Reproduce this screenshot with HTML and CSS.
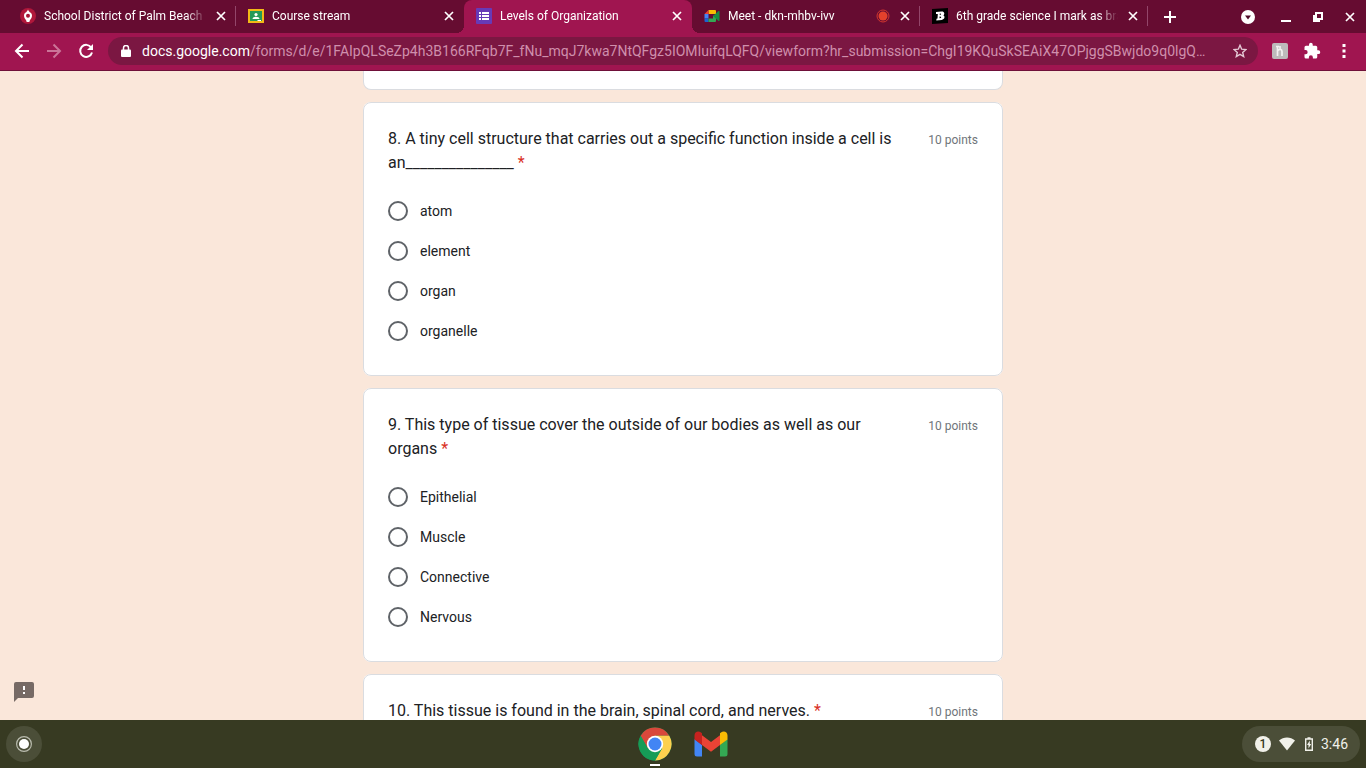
FILE: index.html
```html
<!DOCTYPE html>
<html lang="en">
<head>
<meta charset="utf-8">
<meta name="viewport" content="width=device-width, initial-scale=1">
<title>Levels of Organization</title>
<link rel="stylesheet" href="styles.css">
</head>
<body>
<svg class="defs" aria-hidden="true">
  <symbol id="close" viewBox="0 0 10 10"><path d="M1 1l8 8M9 1L1 9" fill="none" stroke="currentColor" stroke-width="1.7"/></symbol>
</svg>

<header class="browser">
  <div class="tab-strip">
    <nav class="tabs" aria-label="Tabs">
      <div class="tab">
        <a class="tab-link" href="#">
          <svg class="favicon" viewBox="0 0 16 16"><circle cx="8" cy="8" r="8" fill="#b0173b"/><path d="M8 1.500c.4 1.300 1 1.800 1.800 2.800C11.200 5 12 6 12 7.500c0 2.200-1.200 3.500-2 4.500l-.7 2H6.700L6 12C5.200 11 4 9.700 4 7.500 4 6 4.800 5 6.200 4.300 7 3.300 7.600 2.800 8 1.500z" fill="#fff"/><circle cx="8" cy="7.800" r="2" fill="#a51536"/></svg>
          <span class="tab-title">School District of Palm Beach</span>
        </a>
        <button class="tab-close" aria-label="Close School District tab"><svg width="10" height="10"><use href="#close"/></svg></button>
      </div>
      <div class="tab before-active">
        <a class="tab-link" href="#">
          <svg class="favicon" viewBox="0 0 16 16"><path d="M0 1h16v14H0z" fill="#f2b917"/><path d="M2 3h12v10H2z" fill="#249a58"/><circle cx="8" cy="6.500" r="1.600" fill="#fff"/><path d="M4.500 11c0-3 7-3 7 0z" fill="#fff"/><path d="M9.500 12h3.500v1H9.500z" fill="#fff"/></svg>
          <span class="tab-title">Course stream</span>
        </a>
        <button class="tab-close" aria-label="Close Course stream tab"><svg width="10" height="10"><use href="#close"/></svg></button>
      </div>
      <div class="tab active">
        <a class="tab-link" href="#" aria-current="page">
          <svg class="favicon" viewBox="0 0 16 16"><rect width="16" height="16" rx="1" fill="#673ab7"/><path d="M3 4h2v2H3zm3 0h7v2H6zM3 7h2v2H3zm3 0h7v2H6zm-3 3h2v2H3zm3 0h7v2H6z" fill="#fff"/></svg>
          <span class="tab-title">Levels of Organization</span>
        </a>
        <button class="tab-close" aria-label="Close Levels of Organization tab"><svg width="10" height="10"><use href="#close"/></svg></button>
      </div>
      <div class="tab">
        <a class="tab-link" href="#">
          <svg class="favicon" viewBox="0 0 16 16"><path d="M4.500 2H11a1 1 0 0 1 1 1v3H4.500z" fill="#fbbc04"/><path d="M4.500 2v4H.5z" fill="#ea4335"/><path d="M.5 6h4v4.500h-4z" fill="#4285f4"/><path d="M.5 10.500h4V14h-3a1 1 0 0 1-1-1z" fill="#1967d2"/><path d="M4.500 10.500H9V8l3-2v7a1 1 0 0 1-1 1H4.500z" fill="#34a853"/><path d="M9 8l5.500-5c.5-.3 1 0 1 .5v9c0 .5-.5.800-1 .5z" fill="#188b42"/></svg>
          <span class="tab-title">Meet - dkn-mhbv-ivv</span>
          <svg class="recording" viewBox="0 0 14 14" role="img" aria-label="Recording"><circle cx="7" cy="7" r="6" fill="none" stroke="#d3362f" stroke-width="1"/><circle cx="7" cy="7" r="4.500" fill="#e3412c"/></svg>
        </a>
        <button class="tab-close" aria-label="Close Meet tab"><svg width="10" height="10"><use href="#close"/></svg></button>
      </div>
      <div class="tab">
        <a class="tab-link" href="#">
          <svg class="favicon" viewBox="0 0 16 16"><path d="M0 1l16-1v15L0 16z" fill="#000"/><path fill-rule="evenodd" d="M4 4l5.500-.6c3-.3 3.600 2.700 1.800 3.900 2 .8 1.500 4.300-1.600 4.600l-5.400.6.200-1.800 1-.2.300-4.500-1.800.1zM7.800 5.500l-.1 1.500c1.800 0 2-1.700.1-1.500zm-.2 3l-.1 1.800c2.300 0 2.300-2 .1-1.800z" fill="#fff"/></svg>
          <span class="tab-title">6th grade science I mark as brainliest</span>
        </a>
        <button class="tab-close" aria-label="Close 6th grade science tab"><svg width="10" height="10"><use href="#close"/></svg></button>
      </div>
    </nav>
    <button class="new-tab" aria-label="New tab"><svg width="12" height="12" viewBox="0 0 12 12"><path d="M6 0v12M0 6h12" stroke="currentColor" stroke-width="2"/></svg></button>
    <div class="window-controls">
      <button class="tab-search" aria-label="Search tabs"><svg width="14" height="14" viewBox="0 0 14 14"><circle cx="7" cy="7" r="7" fill="#fff"/><path d="M4 5.500h6L7 9.500z" fill="#4f0c2a"/></svg></button>
      <button aria-label="Minimize"><svg width="12" height="12" viewBox="0 0 12 12"><path d="M1 10h10" stroke="currentColor" stroke-width="2"/></svg></button>
      <button aria-label="Restore"><svg width="12" height="12" viewBox="0 0 12 12"><path d="M4 2h6v6H4zM2 4v6h6" fill="none" stroke="currentColor" stroke-width="2"/></svg></button>
      <button aria-label="Close window"><svg width="10" height="10"><use href="#close"/></svg></button>
    </div>
  </div>

  <div class="toolbar">
    <button class="tool" aria-label="Back"><svg width="16" height="16" viewBox="0 0 16 16"><path d="M15 8H2.500M8.500 1.500L2 8l6.500 6.500" fill="none" stroke="currentColor" stroke-width="2"/></svg></button>
    <button class="tool dim" aria-label="Forward"><svg width="16" height="16" viewBox="0 0 16 16"><path d="M1 8h12.500M7.500 1.500L14 8l-6.500 6.500" fill="none" stroke="currentColor" stroke-width="2"/></svg></button>
    <button class="tool" aria-label="Reload"><svg width="16" height="16" viewBox="0 0 16 16"><path d="M13.200 4.500A6 6 0 1 0 14 9.500" fill="none" stroke="currentColor" stroke-width="2"/><path d="M15 1v6H9z" fill="currentColor"/></svg></button>
    <div class="omnibox">
      <svg class="lock" width="10" height="12" viewBox="0 0 10 12"><path d="M2.500 5V3a2.500 2.500 0 0 1 5 0v2" fill="none" stroke="currentColor" stroke-width="1.500"/><rect y="4.500" width="10" height="7.500" rx="1" fill="currentColor"/></svg>
      <label class="host" for="address">docs.google.com</label>
      <input class="address" id="address" type="text" value="/forms/d/e/1FAIpQLSeZp4h3B166RFqb7F_fNu_mqJ7kwa7NtQFgz5IOMIuifqLQFQ/viewform?hr_submission=ChgI19KQuSkSEAiX47OPjggSBwjdo9q0lgQ…">
      <button class="bookmark" aria-label="Bookmark this tab"><svg width="14" height="14" viewBox="0 0 14 14"><path d="M7 1.300l1.700 3.900 4.200.4-3.200 2.800 1 4.200L7 10.400l-3.700 2.200 1-4.200L1.100 5.600l4.200-.4z" fill="none" stroke="currentColor" stroke-width="1.400"/></svg></button>
    </div>
    <div class="extensions">
      <button aria-label="Honey"><svg width="16" height="16" viewBox="0 0 16 16"><rect width="16" height="16" rx="2" fill="#bdbabb"/><path d="M5.500 3v10M8 3v2.500M5.500 8c2-2.500 4.500-2 4.500.5V13M4 3.500h3" fill="none" stroke="#f3f1f1" stroke-width="1.700"/></svg></button>
      <button aria-label="Extensions"><svg width="18" height="18" viewBox="0 0 24 24"><path d="M20.500 11H19V7a2 2 0 0 0-2-2h-4V3.500a2.500 2.500 0 0 0-5 0V5H4a2 2 0 0 0-2 2v3.800h1.500a2.700 2.700 0 0 1 0 5.400H2V20a2 2 0 0 0 2 2h3.800v-1.500a2.700 2.700 0 0 1 5.400 0V22H17a2 2 0 0 0 2-2v-4h1.500a2.500 2.500 0 0 0 0-5z" fill="currentColor"/></svg></button>
      <button aria-label="Chrome menu"><svg width="4" height="14" viewBox="0 0 4 14"><path d="M.5 0h3v3h-3zM.5 5.500h3v3h-3zM.5 11h3v3h-3z" fill="currentColor"/></svg></button>
    </div>
  </div>
</header>

<main class="page">
  <form class="questions">
    <div class="card previous"></div>

    <fieldset class="card" aria-labelledby="q8">
      <div class="question">
        <h2 class="question-title" id="q8">8. A tiny cell structure that carries out a specific function inside a cell is an_______________&nbsp;<span class="required">*</span></h2>
        <span class="points">10 points</span>
      </div>
      <div class="options">
        <label class="option"><input type="radio" name="q8">atom</label>
        <label class="option"><input type="radio" name="q8">element</label>
        <label class="option"><input type="radio" name="q8">organ</label>
        <label class="option"><input type="radio" name="q8">organelle</label>
      </div>
    </fieldset>

    <fieldset class="card" aria-labelledby="q9">
      <div class="question">
        <h2 class="question-title" id="q9">9. This type of tissue cover the outside of our bodies as well as our organs&nbsp;<span class="required">*</span></h2>
        <span class="points">10 points</span>
      </div>
      <div class="options">
        <label class="option"><input type="radio" name="q9">Epithelial</label>
        <label class="option"><input type="radio" name="q9">Muscle</label>
        <label class="option"><input type="radio" name="q9">Connective</label>
        <label class="option"><input type="radio" name="q9">Nervous</label>
      </div>
    </fieldset>

    <fieldset class="card" aria-labelledby="q10">
      <div class="question">
        <h2 class="question-title" id="q10">10. This tissue is found in the brain, spinal cord, and nerves.&nbsp;<span class="required">*</span></h2>
        <span class="points">10 points</span>
      </div>
    </fieldset>
  </form>
  <button class="report" aria-label="Report a problem"><svg width="20" height="20" viewBox="0 0 20 20"><path d="M2 0h16a2 2 0 0 1 2 2v12a2 2 0 0 1-2 2H4l-4 4V2a2 2 0 0 1 2-2z" fill="#766a65"/><path d="M9 4h2v4H9zm0 6h2v2H9z" fill="#fff"/></svg></button>
</main>

<footer class="shelf">
  <button class="launcher" aria-label="Launcher"><svg width="16" height="16" viewBox="0 0 16 16"><circle cx="8" cy="8" r="7.400" fill="none" stroke="#b9bbae" stroke-width="1.200"/><circle cx="8" cy="8" r="5" fill="#fff"/></svg></button>
  <div class="apps">
    <button class="app running" aria-label="Chrome"><svg width="34" height="34" viewBox="0 0 34 34"><circle cx="17" cy="17" r="16.500" fill="#169c57"/><path d="M2.710 8.750A16.500 16.500 0 0 1 31.290 8.750H17L9.860 21.130z" fill="#d9483b"/><path d="M31.290 8.750A16.500 16.500 0 0 1 17 33.500L24.140 21.130 17 8.750z" fill="#fdd04e"/><path d="M2.710 8.750L9.860 21.130 17 17V8.750z" fill="#d9483b"/><path d="M2.710 8.750L9.860 21.130 17 25.250l7.140-4.120L17 33.500A16.500 16.500 0 0 1 2.710 8.750z" fill="#169c57"/><circle cx="17" cy="17" r="8.200" fill="#fff"/><circle cx="17" cy="17" r="6.500" fill="#4285f4"/></svg></button>
    <button class="app" aria-label="Gmail"><svg width="34" height="26" viewBox="0 0 34 26"><path d="M.5 8l7.500 6v11.500H3A2.500 2.500 0 0 1 .5 23z" fill="#4285f4"/><path d="M33.500 8L26 14v11.500h5a2.500 2.500 0 0 0 2.500-2.500z" fill="#34a853"/><path d="M8 4.200l9 6.800 9-6.800V14l-9 6.700L8 14z" fill="#ea4335"/><path d="M.5 4.500c0-4 4-5 6.500-3l1 .8V14L.5 8.400z" fill="#c5221f"/><path d="M33.500 4.500c0-4-4-5-6.500-3l-1 .8V14l7.500-5.600z" fill="#fbbc04"/></svg></button>
  </div>
  <button class="status" aria-label="Status: 1 notification, 3:46">
    <span class="count">1</span>
    <svg width="16" height="14" viewBox="0 0 16 14"><path d="M0 3.500c4.500-4 11.500-4 16 0L8 13.500z" fill="#f1f1ea"/></svg>
    <svg width="10" height="14" viewBox="-2 0 10 14"><path d="M.7 2h6.600v11.300H.7zM2.500 1h3" fill="none" stroke="#f1f1ea" stroke-width="1.400"/><path d="M4.800 3.500L2 8h1.500v3.500L6.200 7H4.800z" fill="#f1f1ea"/></svg>
    <span class="time">3:46</span>
  </button>
</footer>
</body>
</html>
```
FILE: styles.css
```css
* {
  box-sizing: border-box;
}

body {
  margin: 0;
  height: 100vh;
  display: flex;
  flex-direction: column;
  overflow: hidden;
  background: #fae7da;
  color: #202124;
  font-family: Roboto, "Liberation Sans", sans-serif;
}

button {
  display: flex;
  align-items: center;
  justify-content: center;
  flex: none;
  padding: 0;
  border: 0;
  background: none;
  color: inherit;
  font: inherit;
}

svg {
  display: block;
  flex: none;
}

.defs {
  position: absolute;
  width: 0;
  height: 0;
}

/* Browser frame */
.browser {
  flex: none;
  color: #fff;
  background: #a01550;
  border-bottom: 1px solid #6f1039;
}

.tab-strip {
  display: flex;
  height: 33px;
  padding-left: 8px;
  background: #660c31;
}

.tabs {
  display: flex;
  flex: 0 1 1140px;
  min-width: 0;
}

.tab {
  position: relative;
  display: flex;
  align-items: center;
  flex: 1 1 0;
  min-width: 0;
  padding: 0 5px 2px 12px;
}

.tab:not(.active):not(.before-active)::after {
  content: "";
  position: absolute;
  right: 0;
  top: 6px;
  width: 1px;
  height: 20px;
  background: #93466a;
}

.tab.active {
  background: #a01550;
  border-radius: 8px 8px 0 0;
}

.tab.active::before,
.tab.active::after {
  content: "";
  position: absolute;
  bottom: 0;
  width: 8px;
  height: 8px;
}

.tab.active::before {
  right: 100%;
  background: radial-gradient(circle at 0 0, transparent 8px, #a01550 8px);
}

.tab.active::after {
  left: 100%;
  background: radial-gradient(circle at 100% 0, transparent 8px, #a01550 8px);
}

.tab-link {
  display: flex;
  align-items: center;
  flex: 1;
  min-width: 0;
  gap: 8px;
  color: inherit;
  text-decoration: none;
}

.favicon {
  width: 16px;
  height: 16px;
}

.tab-title {
  flex: 1;
  overflow: hidden;
  white-space: nowrap;
  font-size: 12px;
  line-height: 20px;
  -webkit-mask-image: linear-gradient(to left, transparent, #000 20px);
  mask-image: linear-gradient(to left, transparent, #000 20px);
}

.recording {
  width: 14px;
  height: 14px;
}

.tab-close {
  width: 20px;
  height: 20px;
  margin-left: 5px;
}

.new-tab {
  width: 28px;
  margin-left: 8px;
}

.window-controls {
  display: flex;
  margin-left: auto;
}

.window-controls button {
  width: 32px;
}

.window-controls .tab-search {
  width: 44px;
}

.toolbar {
  display: flex;
  align-items: center;
  height: 37px;
  padding: 0 6px 2px;
}

.tool {
  width: 32px;
  height: 28px;
}

.dim {
  color: #cb7498;
}

.omnibox {
  display: flex;
  align-items: center;
  flex: 1;
  min-width: 0;
  height: 28px;
  margin-left: 6px;
  padding: 0 10px 0 13px;
  border-radius: 14px;
  background: #7b1742;
  font-size: 14px;
}

.lock {
  margin-right: 11px;
}

.host {
  flex: none;
}

.address {
  flex: 1;
  min-width: 0;
  padding: 0;
  border: 0;
  outline: 0;
  background: none;
  color: #cf8fac;
  font: inherit;
  text-overflow: ellipsis;
}

.bookmark {
  width: 16px;
  height: 20px;
  color: #e5c9d5;
}

.extensions {
  display: flex;
  margin-left: 6px;
}

.extensions button {
  width: 32px;
  height: 28px;
}

/* Form page */
.page {
  position: relative;
  flex: 1;
  min-height: 0;
  overflow: hidden;
}

.questions {
  display: flex;
  flex-direction: column;
  gap: 12px;
  max-width: 640px;
  margin: 0 auto;
}

.card {
  min-width: 0;
  margin: 0;
  padding: 24px;
  border: 1px solid #dadce0;
  border-radius: 8px;
  background: #fff;
}

.previous {
  height: 19px;
  padding: 0;
  border-top: 0;
  border-radius: 0 0 8px 8px;
}

.question {
  display: flex;
  align-items: flex-start;
  gap: 16px;
}

.question-title {
  flex: 1;
  margin: 0;
  font-size: 16px;
  font-weight: 400;
  line-height: 24px;
}

.required {
  color: #d93025;
}

.points {
  color: #70757a;
  font-size: 12px;
  line-height: 26px;
}

.options {
  display: flex;
  flex-direction: column;
  padding-top: 16px;
}

.option {
  display: flex;
  align-items: center;
  gap: 12px;
  height: 40px;
  font-size: 14px;
}

.option input {
  appearance: none;
  width: 20px;
  height: 20px;
  margin: 0;
  border: 2px solid #5f6368;
  border-radius: 50%;
}

.option input:checked {
  box-shadow: inset 0 0 0 3px #fff;
  background: #673ab7;
}

.report {
  position: absolute;
  left: 14px;
  bottom: 18px;
}

/* System shelf */
.shelf {
  display: grid;
  grid-template-columns: 1fr auto 1fr;
  align-items: center;
  flex: none;
  height: 48px;
  padding: 0 6px;
  background: #373a22;
}

.launcher {
  width: 36px;
  height: 36px;
  border-radius: 50%;
  background: #4b4e38;
}

.apps {
  display: flex;
  gap: 8px;
}

.app {
  width: 48px;
  height: 48px;
}

.running {
  position: relative;
}

.running::after {
  content: "";
  position: absolute;
  left: 19px;
  bottom: 2px;
  width: 10px;
  height: 2px;
  background: #fff;
}

.status {
  justify-self: end;
  gap: 8px;
  height: 36px;
  padding: 0 12px 0 13px;
  border-radius: 18px;
  background: #4b4e38;
  color: #f1f1ea;
  font-size: 14px;
}

.count {
  width: 16px;
  height: 16px;
  border-radius: 50%;
  background: #f1f1ea;
  color: #373a22;
  font-size: 12px;
  font-weight: 500;
  line-height: 16px;
}
```
